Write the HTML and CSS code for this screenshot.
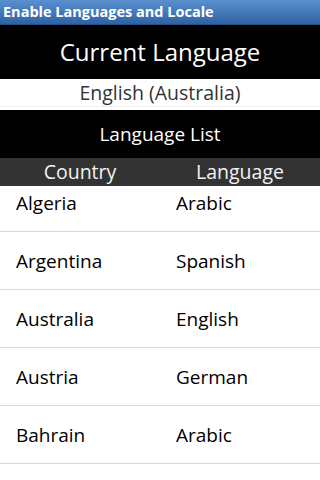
FILE: index.html
```html
<!DOCTYPE html>
<html>
<head>
<meta charset="utf-8">
<link rel="stylesheet" href="styles.css">
</head>
<body>
<div class="titlebar">Enable Languages and Locale</div>
<div class="current-title">Current Language</div>
<div class="current-value">English (Australia)</div>
<div class="list-title">Language List</div>
<div class="cols-head">
  <div class="col">Country</div>
  <div class="col">Language</div>
</div>
<div class="list">
  <div class="row partial"><span class="cell">Algeria</span><span class="cell">Arabic</span></div>
  <div class="row"><span class="cell">Argentina</span><span class="cell">Spanish</span></div>
  <div class="row"><span class="cell">Australia</span><span class="cell">English</span></div>
  <div class="row"><span class="cell">Austria</span><span class="cell">German</span></div>
  <div class="row"><span class="cell">Bahrain</span><span class="cell">Arabic</span></div>
</div>
</body>
</html>
```
FILE: styles.css
```css
html, body {
  margin: 0;
  padding: 0;
  background: #fff;
  width: 320px;
  height: 480px;
  overflow: hidden;
  font-family: "Open Sans", "DejaVu Sans", sans-serif;
}
.titlebar {
  height: 24px;
  border-bottom: 1px solid #244f86;
  background: linear-gradient(#5a90cf, #2f62a3);
  color: #fff;
  font-weight: bold;
  font-size: 14.5px;
  line-height: 24px;
  padding-left: 3px;
  white-space: nowrap;
}
.current-title {
  height: 54px;
  background: #000;
  color: #fff;
  font-size: 24px;
  line-height: 54px;
  text-align: center;
}
.current-value {
  height: 27px;
  border-bottom: 1px solid #f0f0f0;
  margin-bottom: 3px;
  color: #333;
  font-size: 19.5px;
  line-height: 27px;
  text-align: center;
}
.list-title {
  height: 48px;
  background: #000;
  color: #fff;
  font-size: 19px;
  line-height: 48px;
  text-align: center;
}
.cols-head {
  display: grid;
  grid-template-columns: 1fr 1fr;
  height: 28px;
  background: #333;
  color: #f2f2f2;
  font-size: 19.5px;
  line-height: 28px;
  text-align: center;
}
.list {
  display: flex;
  flex-direction: column;
}
.row {
  display: grid;
  grid-template-columns: 160px 160px;
  align-items: end;
  height: 57px;
  border-bottom: 1px solid #d8d8d8;
}
.row .cell {
  padding-left: 16px;
  padding-bottom: 16px;
  font-size: 19px;
  line-height: 24px;
  color: #000;
}
.row.partial {
  height: 45px;
}
```
